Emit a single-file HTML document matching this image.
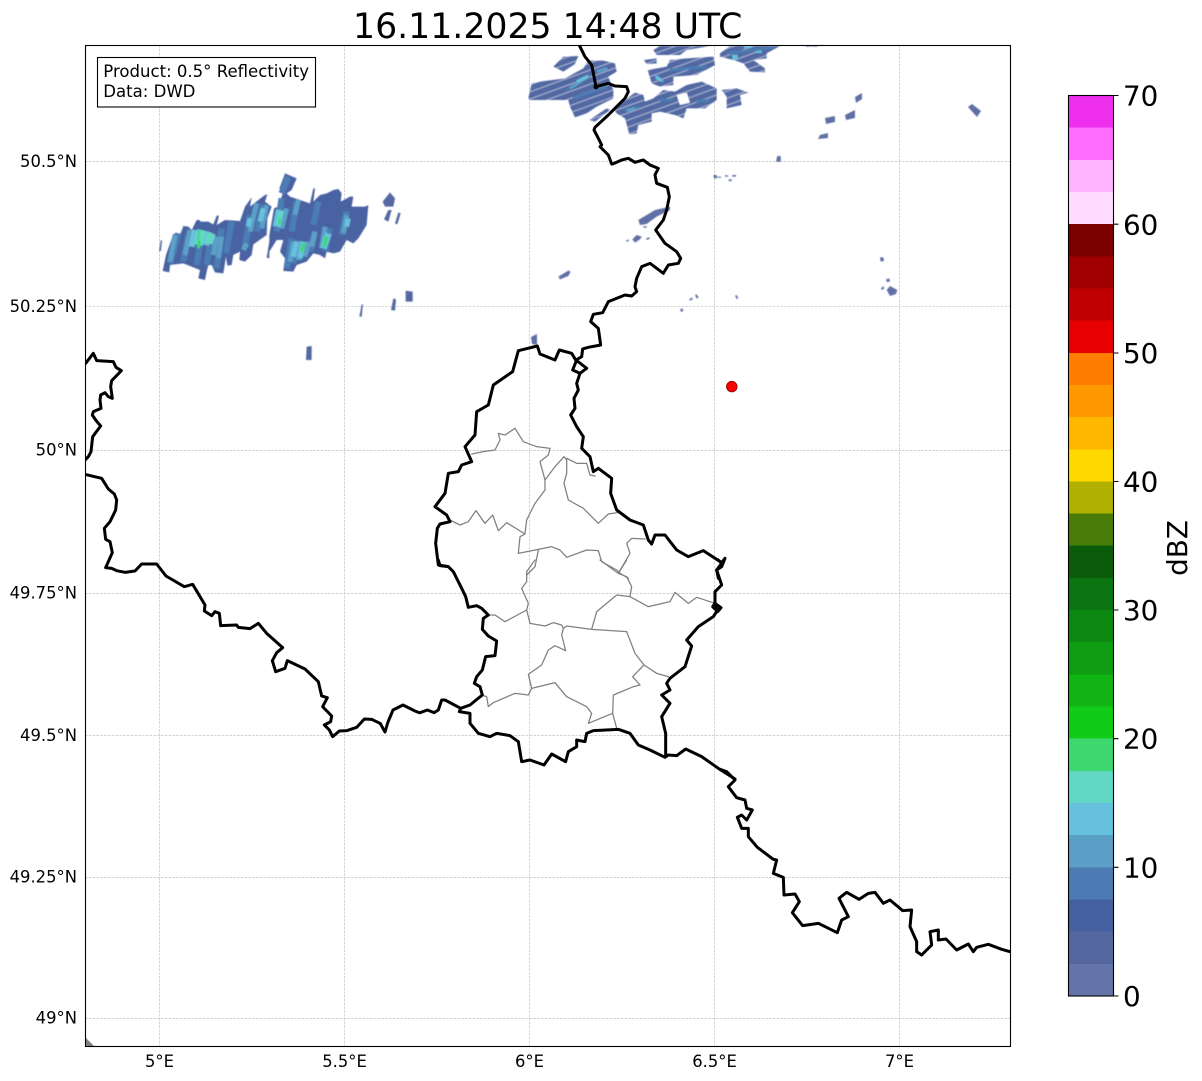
<!DOCTYPE html>
<html>
<head>
<meta charset="utf-8">
<title>16.11.2025 14:48 UTC</title>
<style>
html,body{margin:0;padding:0;background:#fff;width:1202px;height:1081px;overflow:hidden}
svg{display:block}
text{font-family:"DejaVu Sans","Liberation Sans",sans-serif;fill:#000}
.b{fill:none;stroke:#000;stroke-width:9;stroke-linejoin:round;stroke-linecap:round}
.g{fill:none;stroke:#808080;stroke-width:3.8;stroke-linejoin:round;stroke-linecap:round}
.s{fill:none;stroke-linecap:butt}
</style>
</head>
<body>
<svg width="1202" height="1081" viewBox="0 0 1202 1081" xmlns="http://www.w3.org/2000/svg">
<defs>
<clipPath id="ax"><rect x="85.5" y="45.5" width="925" height="1001"/></clipPath>
<filter id="soft" x="-5%" y="-5%" width="110%" height="110%"><feGaussianBlur stdDeviation="0.55"/></filter>
<pattern id="hatch" width="14" height="20" patternUnits="userSpaceOnUse" patternTransform="rotate(-20)">
<rect width="14" height="20" fill="#5168a3"/>
<rect y="15" width="14" height="3" fill="#fff" fill-opacity=".55"/>
</pattern>
</defs>

<text x="547.7" y="38" font-size="34.7" text-anchor="middle">16.11.2025 14:48 UTC</text>

<g clip-path="url(#ax)">
<!-- grid -->
<g stroke="#c2c2c2" stroke-width="0.7" stroke-dasharray="2.6 1.2" fill="none">
<path d="M159.5 45V1047M344.5 45V1047M529.5 45V1047M714.5 45V1047M899.5 45V1047"/>
<path d="M85 161.5H1011M85 306.3H1011M85 450.4H1011M85 593.4H1011M85 735.5H1011M85 877.4H1011M85 1018.5H1011"/>
</g>

<polygon points="86,1038 94,1046 86,1046" fill="#808080"/>

<g filter="url(#soft)">
<!-- main west radar cluster -->
<g transform="translate(150 165) scale(.33333)">
<g fill="#4a62a2">
<polygon points="38,318 48,270 70,207 92,205 100,183 115,185 125,195 140,165 148,165 152,170 175,170 190,178 200,152 207,152 200,180 225,165 270,168 285,125 305,97 300,125 325,105 345,90 352,88 345,110 365,125 352,160 350,210 310,238 305,270 285,290 268,285 270,260 250,270 245,300 232,302 228,275 220,325 195,322 185,300 175,300 170,320 165,345 145,340 150,315 100,295 60,300 58,322"/>
<polygon points="350,278 358,230 358,210 372,130 385,125 400,80 388,70 405,25 440,40 425,75 410,85 420,95 480,115 490,70 495,70 490,110 510,90 530,85 550,75 565,72 575,85 572,110 600,95 610,95 605,125 645,125 655,120 650,180 625,220 610,235 590,225 570,260 550,265 530,260 525,280 510,270 490,265 470,290 440,300 430,320 400,318 405,280 390,260 400,225 380,225 358,260 358,280"/>
<polygon points="28,255 32,225 36,228 32,256" fill="#5468a2"/>
</g>
<g class="s" stroke="#4c7bb3" stroke-width="19">
<path d="M85,205L60,295M115,210L100,290M155,200L140,300M185,210L170,300M215,190L200,310M245,170L228,265M300,150L285,250M340,120L320,200M415,35L395,85M395,100L380,200M440,110L425,200M425,220L410,310M445,225L430,295M505,110L490,180M590,140L575,210M540,190L525,260M495,200L480,260"/>
</g>
<g class="s" stroke="#5b9fc7" stroke-width="15">
<path d="M75,210L60,290M120,195L105,270M200,215L190,270M215,215L205,280M320,115L300,200M350,120L335,190M290,235L280,255M430,230L420,290M455,230L445,285M475,230L465,275M590,150L580,205M525,185L515,250M495,200L485,245M410,130L395,190M445,105L435,150"/>
</g>
<g class="s" stroke="#66c2dc">
<path stroke-width="18" d="M135,195L125,245"/><path stroke-width="24" d="M175,200L165,240"/>
<path stroke-width="15" d="M340,130L330,170M300,160L295,185M595,160L590,185"/>
<path stroke-width="24" d="M390,135L380,185"/><path stroke-width="16" d="M440,230L430,275M460,230L450,280"/>
<path stroke-width="20" d="M535,205L520,250"/>
</g>
<g class="s" stroke="#62d8c4">
<path stroke-width="26" d="M155,195L145,240"/><path stroke-width="24" d="M185,205L175,235"/><path stroke-width="12" d="M395,140L385,180"/>
</g>
<g class="s" stroke="#3ed870">
<path stroke-width="9" d="M148,225L145,250"/><path stroke-width="10" d="M462,235L455,260M530,215L522,245"/><path stroke-width="7" d="M390,160L388,178"/>
</g>
<path class="s" stroke="#20cc50" stroke-width="3" d="M148,195L143,225"/>
</g>

<!-- small cells near west cluster -->
<g transform="translate(80 160) scale(.33333)" fill="#5468a2">
<polygon points="908,125 930,97 945,115 940,140 915,140"/>
<polygon points="912,178 925,150 935,150 925,185"/>
<polygon points="945,190 955,157 962,160 952,193"/>
<polygon points="977,392 998,395 998,425 977,425"/>
<polygon points="933,450 940,415 948,418 945,452"/>
<polygon points="838,470 845,433 849,433 845,470"/>
<polygon points="680,560 695,558 695,600 678,600"/>
</g>

<!-- north cluster -->
<g transform="translate(520 40) scale(.33333)">
<g fill="url(#hatch)">
<polygon points="25,175 35,130 60,125 135,115 190,85 205,62 250,62 285,70 290,95 265,110 280,150 280,175 230,200 200,220 165,232 150,200 145,180 80,180 30,180"/>
<polygon points="100,80 130,50 175,48 165,72 130,95"/>
<polygon points="208,240 260,205 270,210 225,245"/>
<polygon points="280,205 345,158 370,165 375,185 400,175 430,150 465,155 500,135 545,125 590,145 590,180 555,205 500,205 490,235 465,225 420,215 395,220 395,245 355,255 350,280 328,283 315,235 290,220"/>
<polygon points="383,90 440,80 450,60 500,55 580,50 585,75 530,105 460,110 460,135 420,140 395,130"/>
<polygon points="400,30 420,18 570,18 500,30 480,45 410,45"/>
<polygon points="372,60 410,55 410,70 380,72"/>
<polygon points="600,40 630,18 780,18 740,40 740,55 700,60 735,85 735,97 690,95 670,70 640,60 600,50"/>
<polygon points="605,150 650,145 685,158 660,165 665,195 620,205 620,170"/>
<polygon points="855,16 895,16 890,20 860,20"/>
<polygon points="770,362 780,350 783,362 772,366"/>
</g>
<polygon points="470,165 500,158 510,188 480,195" fill="#fff"/>
<g class="s" stroke="#4c7bb3" stroke-width="9">
<path d="M140,150L210,105M160,175L260,140M420,180L460,180M530,185L570,180M450,90L560,80M315,210L360,200M620,40L760,22"/>
</g>
<g class="s" stroke="#5b9fc7" stroke-width="8">
<path d="M150,145L205,110M230,95L262,85M320,212L345,205M405,105L430,125"/>
</g>
<g class="s" stroke="#66c2dc">
<path stroke-width="9" d="M170,125L205,108"/><path stroke-width="9" d="M408,112L425,122"/><path stroke-width="16" d="M645,44L645,60"/>
<path stroke-width="6" d="M672,21L695,21M708,36L725,36"/>
</g>
</g>

<!-- east scattered cells -->
<g transform="translate(540 150) scale(.33333)" fill="#6070a6">
<polygon points="708,35 712,18 722,18 722,35"/>
<polygon points="520,75 530,75 530,85 522,85"/>
<polygon points="530,80 543,80 543,83 530,83"/>
<polygon points="555,75 565,77 565,80 555,80"/>
<polygon points="577,75 588,75 588,80 577,80"/>
<polygon points="565,88 577,88 572,95 566,92"/>
<polygon points="295,210 345,180 390,170 390,180 350,200 320,222 300,225"/>
<polygon points="310,228 322,230 318,234 310,232"/>
<polygon points="258,272 265,268 267,272 260,276"/>
<polygon points="277,268 290,255 305,260 300,268 285,278"/>
<polygon points="318,265 328,262 330,266 320,270"/>
<polygon points="55,380 85,362 92,365 85,378 60,388"/>
<polygon points="447,448 457,442 458,448 450,452"/>
<polygon points="465,435 470,433 476,442 470,446"/>
<polygon points="420,478 428,475 430,483 423,486"/>
<polygon points="585,437 590,435 595,445 590,447"/>
<polygon points="1020,322 1030,322 1032,333 1022,335"/>
<polygon points="1038,388 1048,385 1050,395 1040,396"/>
<polygon points="1023,415 1030,408 1033,415 1026,420"/>
<polygon points="1040,420 1050,408 1072,420 1068,432 1050,438"/>
</g>
<g fill="#5f70a6">
<polygon points="825,118 835,116 835,122 826,124"/>
<polygon points="820,135 828,133 828,138 818,139"/>
<polygon points="845,115 855,110 855,118 846,120"/>
<polygon points="855,97 862,93 862,99 856,103"/>
<polygon points="968,107 972,104 981,111 977,117"/>
<polygon points="531,337 537,334 537,345 532,344"/>
<polygon points="159,251 161,240 162,241 161,251"/>
</g>
</g>

<!-- cantonal borders -->
<g transform="translate(420 340) scale(.33333)" class="g">
<path d="M155,342L190,335L225,330L240,300L235,280L255,285L285,265L310,305L350,320L390,325L385,345L360,365L375,420L375,450L345,490L320,540L315,580"/>
<path d="M375,420L405,380L432,350L440,360L440,400L432,430L445,480L490,505L535,550L565,522L593,518"/>
<path d="M440,355L470,370L500,370L510,405L525,408"/>
<path d="M90,540L120,555L145,545L168,512L195,550L218,525L235,572L260,548L315,582L300,590L295,640L355,628L395,620L420,630L440,652L500,630L535,632L545,665L590,690L600,700L625,715"/>
<path d="M355,630L345,680L320,705"/>
<path d="M595,700L630,640L620,610L635,595L675,597"/>
</g>
<g transform="translate(420 560) scale(.33333)" class="g">
<path d="M345,0L320,35L320,65L305,85L325,130L320,150L255,185L225,165L205,165"/>
<path d="M320,150L330,190L375,198L400,188L425,195L430,205L425,225L437,272L405,257L385,270L365,315L325,343L335,385L325,405L285,400L220,428L205,440L200,410L185,405"/>
<path d="M335,385L405,368L440,410L500,440L515,460L505,490L578,460L590,505"/>
<path d="M578,460L580,405L640,380L660,375L638,350L672,315L710,340L745,350"/>
<path d="M672,315L645,280L620,215L515,208L440,198L430,205"/>
<path d="M515,208L530,155L590,105L630,110L635,80L620,50L595,40L620,0"/>
<path d="M540,0L595,40"/>
<path d="M630,110L685,140L750,125L765,97L805,130L830,112L885,130"/>
</g>

<!-- country borders -->
<g transform="translate(80 340) scale(.33333)" class="b">
<path d="M10,75L17,70L40,40L50,62L100,65L108,82L124,92L95,122L92,140L97,175L85,170L75,158L62,165L60,180L63,205L40,215L37,225L47,240L62,258L38,290L33,335L25,350L10,365"/>
<path d="M10,402L65,415L85,447L103,462L110,480L107,510L90,545L73,565L77,598L90,605L97,638L77,683L95,685L110,692L135,697L165,693L185,672L230,672L258,708L313,740L338,733L375,795L373,813L395,827L405,815L418,820L422,857L470,855L475,862L510,866L535,850L560,880L608,923L590,938L577,962L587,995L615,985L622,962L675,987L715,1025L725,1068L742,1073L728,1100L755,1128L752,1145L733,1155L748,1170L758,1190L778,1173L800,1172L830,1162L853,1137L875,1138L900,1150"/>
</g>
<path d="M380,723L385,732L388,722L393,710L403,705L415,711L420,713" fill="none" stroke="#000" stroke-width="3" stroke-linejoin="round"/>
<g transform="translate(420 560) scale(.33333)" class="b">
<path d="M0,458L22,450L42,458L55,450L65,420L75,420L122,445L150,435L187,405L180,380L163,370L170,350L187,330L197,290L225,287L230,243L205,228L187,208L190,175L205,165L185,145L170,137L145,142L137,110L125,85L100,35L85,20L60,17L55,0"/>
<path d="M122,445L118,455L150,460L150,490L175,520L210,530L230,520L270,527L295,545L305,605L330,600L372,615L395,582L437,605L445,575L470,560L470,540L495,545L500,520L520,512L595,508L630,520L655,555L690,570L735,592L745,585L770,587L797,567L845,590L895,625L945,657"/>
<path d="M895,0L905,10L890,30L905,75L885,95L885,130L893,150L880,170L835,200L800,240L815,258L795,320L750,355L740,370L750,390L725,405L750,430L725,470L737,520L737,590"/>
<path d="M885,130L878,140L893,155L903,143Z"/>
</g>
<g transform="translate(420 340) scale(.33333)" class="b">
<path d="M85,680L55,675L47,610L52,565L60,552L90,545L80,525L45,500L75,460L85,400L115,395L125,375L155,365L135,320L165,285L170,215L205,195L220,135L278,95L295,32L352,18L360,42L405,60L418,30L455,40L470,65"/>
<path d="M480,100L470,130L475,150L462,175L465,205L452,225L470,260L490,290L485,325L510,350L520,395L535,385L575,415L572,460L590,510L630,540L670,555L685,600L695,612L705,585L735,585L770,630L805,650L850,632L905,668L915,655L905,680L890,690L895,715"/>
</g>
<g transform="translate(520 40) scale(.33333)" class="b">
<path d="M175,10L195,50L215,75L222,110L228,140L265,130L285,138L320,140L325,155L315,175L285,205L265,225L225,262L222,270L235,295L245,315L240,320L265,345L275,372"/>
<circle cx="228" cy="141" r="3"/>
</g>
<g transform="translate(540 150) scale(.33333)" class="b">
<path d="M218,42L245,30L265,25L285,37L310,30L330,45L355,55L345,75L350,100L382,112L388,140L380,180L370,210L347,240L375,280L410,305L422,325L415,340L385,345L370,370L330,340L305,350L290,385L285,410L290,425L275,438L255,435L205,455L188,488L160,493L152,515L175,535L182,585L145,592L128,597L125,620L108,630L140,655L120,670L98,660L108,635"/>
</g>
<g transform="translate(720 760) scale(.33333)" class="b">
<path d="M0,28L20,35L45,60L25,80L50,113L75,120L80,145L97,150L80,180L65,165L52,172L65,205L85,205L85,230L112,262L160,298L170,300L160,340L190,352L192,405L225,402L238,425L217,458L248,497L295,490L352,518L365,480L385,470L357,415L380,397L417,418L445,400L465,397L490,430L510,420L548,452L575,450L570,500L590,545L590,575L605,585L635,555L630,515L655,510L655,540L678,537L710,570L745,552L760,575L770,562L805,553L845,568L880,578"/>
</g>

<circle cx="731.8" cy="386.6" r="5.3" fill="#ff0000" stroke="#8a0000" stroke-width="0.8"/>
</g>

<!-- axes frame -->
<rect x="85.5" y="45.5" width="925" height="1001" fill="none" stroke="#000" stroke-width="1.1"/>

<!-- info box -->
<rect x="97.5" y="57.5" width="218" height="49.5" fill="#fff" stroke="#000" stroke-width="1.1"/>
<text x="103.3" y="77" font-size="16.55">Product: 0.5° Reflectivity</text>
<text x="103.3" y="97" font-size="16.55">Data: DWD</text>

<!-- map tick labels -->
<g font-size="16.4" text-anchor="end">
<text x="77" y="167">50.5°N</text>
<text x="77" y="312">50.25°N</text>
<text x="77" y="455.5">50°N</text>
<text x="77" y="598.5">49.75°N</text>
<text x="77" y="741">49.5°N</text>
<text x="77" y="882.5">49.25°N</text>
<text x="77" y="1023.5">49°N</text>
</g>
<g font-size="16.4" text-anchor="middle">
<text x="159.5" y="1067">5°E</text>
<text x="344.5" y="1067">5.5°E</text>
<text x="529.5" y="1067">6°E</text>
<text x="714.5" y="1067">6.5°E</text>
<text x="899.5" y="1067">7°E</text>
</g>

<!-- colorbar -->
<g shape-rendering="crispEdges">
<rect x="1068.5" y="95.5" width="45" height="32.6" fill="#ee30ee"/>
<rect x="1068.5" y="127.66" width="45" height="32.6" fill="#ff6cff"/>
<rect x="1068.5" y="159.82" width="45" height="32.6" fill="#ffb4ff"/>
<rect x="1068.5" y="191.98" width="45" height="32.6" fill="#ffdcff"/>
<rect x="1068.5" y="224.14" width="45" height="32.6" fill="#7c0000"/>
<rect x="1068.5" y="256.3" width="45" height="32.6" fill="#a00000"/>
<rect x="1068.5" y="288.46" width="45" height="32.6" fill="#c00000"/>
<rect x="1068.5" y="320.62" width="45" height="32.6" fill="#e60000"/>
<rect x="1068.5" y="352.78" width="45" height="32.6" fill="#ff7c00"/>
<rect x="1068.5" y="384.94" width="45" height="32.6" fill="#ff9800"/>
<rect x="1068.5" y="417.1" width="45" height="32.6" fill="#ffb800"/>
<rect x="1068.5" y="449.26" width="45" height="32.6" fill="#ffd800"/>
<rect x="1068.5" y="481.42" width="45" height="32.6" fill="#b0b000"/>
<rect x="1068.5" y="513.58" width="45" height="32.6" fill="#4a7c0a"/>
<rect x="1068.5" y="545.74" width="45" height="32.6" fill="#0a5c0a"/>
<rect x="1068.5" y="577.9" width="45" height="32.6" fill="#0c7410"/>
<rect x="1068.5" y="610.06" width="45" height="32.6" fill="#0c8810"/>
<rect x="1068.5" y="642.22" width="45" height="32.6" fill="#0e9c12"/>
<rect x="1068.5" y="674.38" width="45" height="32.6" fill="#10b414"/>
<rect x="1068.5" y="706.54" width="45" height="32.6" fill="#10cc18"/>
<rect x="1068.5" y="738.7" width="45" height="32.6" fill="#3ed870"/>
<rect x="1068.5" y="770.86" width="45" height="32.6" fill="#62d8c4"/>
<rect x="1068.5" y="803.02" width="45" height="32.6" fill="#66c2dc"/>
<rect x="1068.5" y="835.18" width="45" height="32.6" fill="#5b9fc7"/>
<rect x="1068.5" y="867.34" width="45" height="32.6" fill="#4c7bb3"/>
<rect x="1068.5" y="899.5" width="45" height="32.6" fill="#4560a0"/>
<rect x="1068.5" y="931.66" width="45" height="32.6" fill="#54689f"/>
<rect x="1068.5" y="963.82" width="45" height="32.18" fill="#6474a8"/>
</g>
<rect x="1068.5" y="95.5" width="45" height="900.5" fill="none" stroke="#000" stroke-width="1.1"/>
<path d="M1113.5 95.5h5M1113.5 224.2h5M1113.5 353h5M1113.5 481.5h5M1113.5 610h5M1113.5 738.7h5M1113.5 867.3h5M1113.5 996h5" stroke="#000" stroke-width="1.1" fill="none"/>
<g font-size="27.78">
<text x="1123" y="105.5">70</text>
<text x="1123" y="234.3">60</text>
<text x="1123" y="363">50</text>
<text x="1123" y="491.5">40</text>
<text x="1123" y="620">30</text>
<text x="1123" y="748.7">20</text>
<text x="1123" y="877.3">10</text>
<text x="1123" y="1006">0</text>
</g>
<text transform="translate(1187 548) rotate(-90)" font-size="27.78" text-anchor="middle">dBZ</text>
</svg>
</body>
</html>
